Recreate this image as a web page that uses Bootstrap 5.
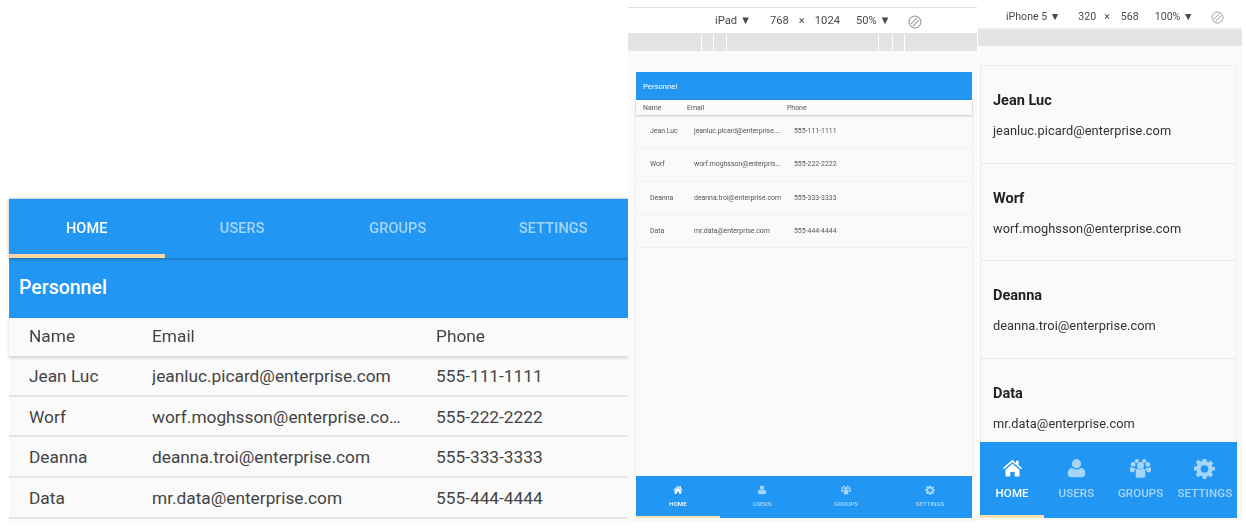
<!DOCTYPE html>
<html lang="en">
<head>
<meta charset="utf-8">
<title>Personnel</title>
<link href="https://cdn.jsdelivr.net/npm/bootstrap@5.3.0/dist/css/bootstrap.min.css" rel="stylesheet">
<style>
html,body{height:532px;overflow:hidden;background:#fff}
body{font-family:Roboto,"Liberation Sans",sans-serif;color:#444}
.stage{height:532px}
.pane-a{width:628px;padding:198px 0 0 9px;flex:none;overflow:hidden;filter:blur(.35px)}
.pane-b{width:350px;flex:none;filter:blur(.5px)}
.pane-c{width:268px;flex:none;filter:blur(.3px)}
.blue{background:#2196f3;color:#fff}
.tabbar{height:60px;width:622px;box-shadow:0 1px 3px rgba(0,0,0,.3);position:relative;border-top:1px solid #cfd8dc}
.tabitem{flex:1 1 0;display:flex;align-items:center;justify-content:center;font-size:14.5px;font-weight:500;color:rgba(255,255,255,.6);height:100%;padding-top:1px;letter-spacing:.1px}
.tabitem.on{color:#fff;box-shadow:inset 0 -4px 0 #ffd79e}
.bandlg{height:60px;padding-left:10px;font-size:19.5px;font-weight:500;display:flex;align-items:center}
.tbl{background:#fafafa;font-size:17.3px}
.trow{display:flex;align-items:center;border-bottom:2px solid #e6e6e6}
.tbl-a{padding-bottom:4px}
.tbl-a .trow{height:40.7px;padding-top:3px}
.tbl-a .thead-r{height:38px;padding-top:0;border-bottom:0;box-shadow:0 2px 3px rgba(0,0,0,.16);position:relative}
.tbl-a .c1{width:143px;padding-left:20px;flex:none}
.tbl-a .c2{width:284px;flex:none;overflow:hidden;text-overflow:ellipsis;white-space:nowrap;padding-right:32px}
.devbar{height:27px;border-top:1px solid #ddd;border-bottom:1px solid #e4e4e4;display:flex;align-items:center;font-size:11.2px;color:#4a4a4a;margin-top:7px;padding:2px 0 0 87px;width:349px}
.devbar-c{margin-top:0;height:30px;border-top:0;padding:6px 0 0 28px;width:264px;border-bottom:2px solid #ededed;font-size:10.6px}
.m19{margin-left:19px}.m10{margin-left:10px}.m8{margin-left:8px}.m15{margin-left:15px}.m16{margin-left:16px}.m17{margin-left:17px}.m11{margin-left:11px}.m18{margin-left:18px}
.rotate{display:block}
.rulerb{height:17px;margin-top:0;width:349px;background:#e4e4e4;display:flex}
.rulerb i{display:block;border-right:1px solid #fff}
.rulerb-c{height:16px;width:264px;background:#e4e4e4}
.viewb{height:471px;width:349px;background:#fafafa;padding:21px 5px 0 8px}
.band-sm{height:28px;padding:1px 0 0 7px;font-size:7.7px;font-weight:400;display:flex;align-items:center}
.tbl-b{font-size:6.9px;height:376px;box-shadow:0 0 2px rgba(0,0,0,.12);color:#555}
.tbl-b .trow{height:33.3px;border-bottom:1px solid #f2f2f2}
.tbl-b .thead-r{height:15px;padding-top:1px;border-bottom:0;box-shadow:0 1px 2px rgba(0,0,0,.2);position:relative}
.tbl-b .c1{width:51px;padding-left:7px;flex:none}
.tbl-b .c2{width:100px;flex:none;overflow:hidden;text-overflow:ellipsis;white-space:nowrap;padding-right:13px}
.tbl-b .body-r{padding-left:7px}
.botnav{display:flex;height:42px}
.botitem{flex:1 1 0;display:flex;flex-direction:column;align-items:center;justify-content:center;color:rgba(255,255,255,.6);font-size:6.1px;gap:4px;font-weight:500;border-bottom:2px solid transparent;padding-top:2px}
.botitem.on{color:#fff;border-bottom-color:#ffe0b2}
.botitem svg{width:10px;height:10px;fill:currentColor;display:block}
.viewc{height:475px;width:264px;background:#fafafa;padding:19px 5px 0 2px}
.cardlist{height:377px;overflow:hidden;border:1px solid #eee;border-bottom:0;background:#fafafa}
.person{height:97.5px;border-bottom:1px solid #e8e8e8;padding:26px 0 0 12px;color:#333}
.person b{display:block;font-size:14.5px;font-weight:700;color:#222;line-height:18px}
.person span{display:block;font-size:12.8px;margin-top:13px;line-height:16px;letter-spacing:.05px}
.botnav-c{height:76px}
.botnav-c .botitem{font-size:11.5px;gap:6px;padding-top:3px;border-bottom-width:3px;letter-spacing:.1px}
.botnav-c svg{width:21px;height:21px}
</style>
</head>
<body>
<svg width="0" height="0" class="d-block position-absolute">
  <defs>
    <symbol id="ic-home" viewBox="0 0 24 24"><path d="M12 2 1 11.4l1.2 1.500L12 4.600l9.800 8.300 1.200-1.500-4-3.400V3h-3v2.900z"/><path d="M12 6.600 4 13.300V21h5.500v-5h5v5H20v-7.700z"/></symbol>
    <symbol id="ic-user" viewBox="0 0 24 24"><circle cx="12" cy="6.500" r="5.300"/><path d="M2 18c0-4.400 2.600-6.600 5-6.600 1.300 1 3 1.600 5 1.600s3.700-.6 5-1.600c2.400 0 5 2.200 5 6.600 0 2.400-1.500 4-4 4H6c-2.500 0-4-1.600-4-4z"/></symbol>
    <symbol id="ic-group" viewBox="0 0 24 24"><circle cx="12" cy="8.600" r="4"/><circle cx="3.600" cy="7.300" r="2.800"/><circle cx="20.400" cy="7.300" r="2.800"/><circle cx="7.800" cy="3.400" r="2.400"/><circle cx="16.200" cy="3.400" r="2.400"/><path d="M6.500 15.500c0-1.800 1-3.300 2.200-3.500.9.700 2 1.100 3.300 1.100s2.400-.4 3.300-1.100c1.200.2 2.200 1.700 2.200 3.500v5c0 1.200-.8 2-2 2h-7c-1.200 0-2-.8-2-2z"/><path d="M0 12c0-.9.600-1.500 1.300-1.500.8.600 1.500.8 2.300.8.500 0 1.300 0 2.100-.3 0 .8.400 1.500 1 2.100-1.400.6-2.200 1.900-2.200 3.300H1.600C.6 16.400 0 15.800 0 15zM24 12c0-.9-.6-1.500-1.300-1.500-.8.600-1.500.8-2.300.8-.5 0-1.300 0-2.100-.3 0 .8-.4 1.500-1 2.100 1.400.6 2.200 1.900 2.200 3.300h2.900c1 0 1.600-.6 1.600-1.400z"/></symbol>
    <symbol id="ic-cog" viewBox="0 0 24 24"><path fill-rule="evenodd" d="M10 1h4l.6 3.100 1.900.8 2.700-1.800 2.800 2.800-1.800 2.700.8 1.900L24 10v4l-3.100.6-.8 1.900 1.800 2.700-2.800 2.800-2.700-1.800-1.900.8L14 24h-4l-.6-3.100-1.900-.8-2.700 1.800L2 19.100l1.800-2.700-.8-1.900L0 14v-4l3.100-.6.8-1.900L2 4.900l2.800-2.800 2.700 1.800 1.900-.8zM12 8.200a4.300 4.300 0 1 0 0 8.600 4.300 4.300 0 0 0 0-8.600z"/></symbol>
    <symbol id="ic-rot" viewBox="0 0 16 16"><circle cx="8" cy="8" r="6.800" fill="none" stroke="#999" stroke-width="1.200"/><path d="M3.300 10.300 10.300 3.300M5.700 12.700 12.700 5.700" stroke="#999" stroke-width="1.200" fill="none"/></symbol>
  </defs>
</svg>
<div class="stage d-flex">
  <section class="pane-a">
    <nav class="tabbar blue d-flex">
      <div class="tabitem on">HOME</div>
      <div class="tabitem">USERS</div>
      <div class="tabitem">GROUPS</div>
      <div class="tabitem">SETTINGS</div>
    </nav>
    <div class="bandlg blue">Personnel</div>
    <div class="tbl tbl-a">
      <div class="trow thead-r"><div class="c1">Name</div><div class="c2">Email</div><div>Phone</div></div>
      <div class="trow"><div class="c1">Jean Luc</div><div class="c2">jeanluc.picard@enterprise.com</div><div>555-111-1111</div></div>
      <div class="trow"><div class="c1">Worf</div><div class="c2">worf.moghsson@enterprise.com</div><div>555-222-2222</div></div>
      <div class="trow"><div class="c1">Deanna</div><div class="c2">deanna.troi@enterprise.com</div><div>555-333-3333</div></div>
      <div class="trow"><div class="c1">Data</div><div class="c2">mr.data@enterprise.com</div><div>555-444-4444</div></div>
    </div>
  </section>

  <section class="pane-b">
    <div class="devbar"><span>iPad ▼</span><span class="m19">768</span><span class="m10">×</span><span class="m10">1024</span><span class="m16">50% ▼</span><svg class="rotate m17" width="14" height="14"><use href="#ic-rot"/></svg></div>
    <div class="rulerb"><i style="width:74px"></i><i style="width:12px"></i><i style="width:13px"></i><i style="width:152px"></i><i style="width:14px"></i><i style="width:12px"></i></div>
    <div class="viewb">
      <div class="band-sm blue">Personnel</div>
      <div class="tbl tbl-b">
        <div class="trow thead-r"><div class="c1">Name</div><div class="c2">Email</div><div>Phone</div></div>
        <div class="trow body-r"><div class="c1">Jean Luc</div><div class="c2">jeanluc.picard@enterprise.com</div><div>555-111-1111</div></div>
        <div class="trow body-r"><div class="c1">Worf</div><div class="c2">worf.moghsson@enterprise.com</div><div>555-222-2222</div></div>
        <div class="trow body-r"><div class="c1">Deanna</div><div class="c2">deanna.troi@enterprise.com</div><div>555-333-3333</div></div>
        <div class="trow body-r"><div class="c1">Data</div><div class="c2">mr.data@enterprise.com</div><div>555-444-4444</div></div>
      </div>
      <nav class="botnav blue">
        <div class="botitem on"><svg><use href="#ic-home"/></svg>HOME</div>
        <div class="botitem"><svg><use href="#ic-user"/></svg>USERS</div>
        <div class="botitem"><svg><use href="#ic-group"/></svg>GROUPS</div>
        <div class="botitem"><svg><use href="#ic-cog"/></svg>SETTINGS</div>
      </nav>
    </div>
  </section>

  <section class="pane-c">
    <div class="devbar devbar-c"><span>iPhone 5 ▼</span><span class="m18">320</span><span class="m8">×</span><span class="m11">568</span><span class="m16">100% ▼</span><svg class="rotate m18" width="13" height="13"><use href="#ic-rot"/></svg></div>
    <div class="rulerb-c"></div>
    <div class="viewc">
      <div class="cardlist">
        <div class="person"><b>Jean Luc</b><span>jeanluc.picard@enterprise.com</span></div>
        <div class="person"><b>Worf</b><span>worf.moghsson@enterprise.com</span></div>
        <div class="person"><b>Deanna</b><span>deanna.troi@enterprise.com</span></div>
        <div class="person"><b>Data</b><span>mr.data@enterprise.com</span></div>
      </div>
      <nav class="botnav botnav-c blue">
        <div class="botitem on"><svg><use href="#ic-home"/></svg>HOME</div>
        <div class="botitem"><svg><use href="#ic-user"/></svg>USERS</div>
        <div class="botitem"><svg><use href="#ic-group"/></svg>GROUPS</div>
        <div class="botitem"><svg><use href="#ic-cog"/></svg>SETTINGS</div>
      </nav>
    </div>
  </section>
</div>
<script src="https://cdn.jsdelivr.net/npm/bootstrap@5.3.0/dist/js/bootstrap.bundle.min.js"></script>
</body>
</html>
